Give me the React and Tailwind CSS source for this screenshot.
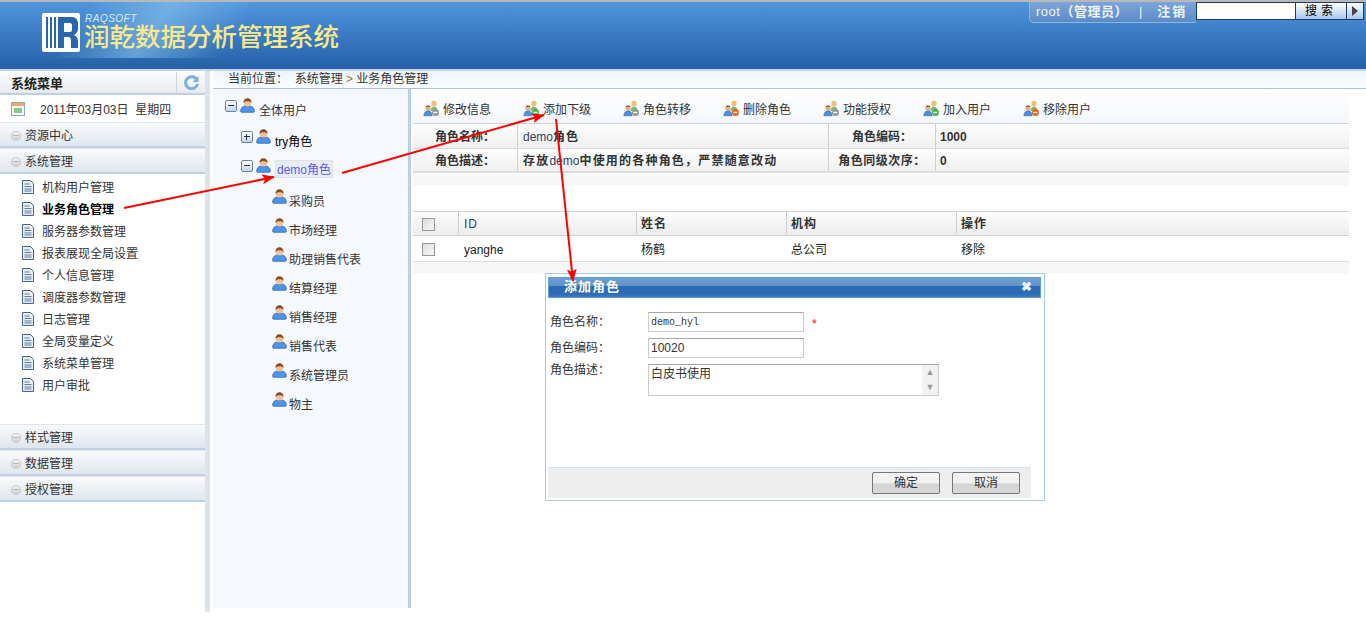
import React from 'react';

const FONT = '"Liberation Sans", "Noto Sans CJK SC", sans-serif';

const menuItems = ['机构用户管理', '业务角色管理', '服务器参数管理', '报表展现全局设置', '个人信息管理', '调度器参数管理', '日志管理', '全局变量定义', '系统菜单管理', '用户审批'];
const treeChildren = ['采购员', '市场经理', '助理销售代表', '结算经理', '销售经理', '销售代表', '系统管理员', '物主'];
const tools = [
  { label: '修改信息', badge: '#8a9a9a' },
  { label: '添加下级', badge: '#4caf50' },
  { label: '角色转移', badge: '#8a9a9a' },
  { label: '删除角色', badge: '#e8641c' },
  { label: '功能授权', badge: '#8a9a9a' },
  { label: '加入用户', badge: '#4caf50' },
  { label: '移除用户', badge: '#e8641c' },
];

const Person = () => (
  <svg width="15" height="15" viewBox="0 0 15 15" className="shrink-0">
    <path d="M.6 13c0-2.500 2-4.800 3.900-4.800h6c1.900 0 3.900 2.300 3.900 4.800 0 .8-.5 1.300-1 1.300H1.600c-.5 0-1-.5-1-1.300z" fill="#4a94ec" stroke="#2a5fa8" strokeWidth="0.7" />
    <circle cx="7.500" cy="4.700" r="3.800" fill="#f2c29a" />
    <path d="M3.500 5C3.300 2 5.200.3 7.500.3S11.700 2 11.500 5C10.500 3.600 9 3.200 7.500 3.200S4.500 3.600 3.500 5z" fill="#8a4a20" />
  </svg>
);

const GroupIcon = ({ badge }) => (
  <svg width="18" height="17" viewBox="0 0 18 17" className="shrink-0">
    <circle cx="11" cy="3.500" r="2.700" fill="#f0c070" />
    <path d="M7.500 11c0-3 1.500-4.500 3.500-4.500s3.500 1.500 3.500 4.500z" fill="#86b86a" />
    <circle cx="5" cy="8" r="2.600" fill="#e8b08a" />
    <path d="M4 5.800c2-1 3 0 3.300 1.500-1.500-.8-3-.6-4.500 0 0-.7.500-1.200 1.200-1.500z" fill="#8a4a20" />
    <path d="M.8 15.800c0-3 1.700-5 4.200-5s4.200 2 4.200 5z" fill="#4a90e2" stroke="#2a5fa8" strokeWidth="0.5" />
    <circle cx="12.500" cy="12.500" r="3.500" fill={badge} />
    <rect x="10.500" y="11.800" width="4" height="1.400" fill="#fff" />
  </svg>
);

const TreeBox = ({ plus }) => (
  <span className="relative w-[12px] h-[12px] shrink-0 border border-[#6a86a4] rounded-[2px] bg-gradient-to-b from-[#ffffff] to-[#c4d4e6]">
    <span className="absolute left-[2px] top-[4px] w-[6px] h-[1px] bg-[#223344]" />
    {plus && <span className="absolute left-[4px] top-[2px] w-[1px] h-[6px] bg-[#223344]" />}
  </span>
);

const FileIcon = () => (
  <svg width="12" height="14" viewBox="0 0 12 14" className="shrink-0">
    <path d="M.5.500h8l3 3v10H.500z" fill="#e8eef6" stroke="#46648a" />
    <path d="M2.500 4h5M2.500 6.500h7M2.500 9h7M2.500 11h7" stroke="#5a7aa0" strokeWidth="1" />
  </svg>
);

const AccordionBar = ({ label }) => (
  <div className="flex items-center h-[26px] border-t border-b-2 border-t-[#e4e4e4] border-b-[#bdd0e4] bg-gradient-to-b from-[#f8fafc] to-[#dfe6ee] pl-[11px] gap-[4px] text-[12px] text-[#333]">
    <span className="w-[10px] h-[10px] mt-[2px] rounded-full border border-[#c8c8c8] bg-gradient-to-b from-[#f4f4f4] to-[#cfcfcf] flex items-center justify-center">
      <span className="w-[6px] h-px bg-[#bbb]" />
    </span>
    <span className="pt-[2px]">{label}</span>
  </div>
);

const Checkbox = () => (
  <span className="block w-[13px] h-[13px] border border-[#999] bg-gradient-to-br from-[#dcdcdc] to-[#f8f8f8]" />
);

const Cell = ({ className, children }) => (
  <div className={`flex items-center pt-[2px] border-r border-[#ccd0d6] ${className}`}>{children}</div>
);

const Arrows = () => (
  <svg className="absolute left-0 top-0 pointer-events-none" width="1366" height="618" viewBox="0 0 1366 618">
    <defs>
      <marker id="head" markerWidth="14" markerHeight="12" refX="12" refY="6" orient="auto" markerUnits="userSpaceOnUse">
        <path d="M0 1L13 6L0 11L3 6z" fill="#f00" />
      </marker>
    </defs>
    <g stroke="#f00" strokeWidth="2" fill="none">
      <line x1="124" y1="208" x2="274" y2="177" markerEnd="url(#head)" />
      <line x1="342" y1="173" x2="544" y2="115" markerEnd="url(#head)" />
      <line x1="556" y1="119" x2="573" y2="281" markerEnd="url(#head)" />
    </g>
  </svg>
);

const Dialog = () => (
  <div className="absolute left-[545px] top-[273px] w-[500px] h-[228px] border border-[#a4cce4] bg-white p-[2px] pt-[3px] flex flex-col text-[12px] text-[#333]">
    <div className="flex items-start justify-between h-[21px] mr-[1px] border border-[#5aa0dc] bg-[linear-gradient(#6f9fd0_0%,#5f93ca_40%,#2b6ab4_42%,#2b6ab4_80%,#3c78bc_100%)] pl-[15px] pr-[8px]">
      <span className="text-[13px] leading-[17px] font-bold text-white tracking-[1px]">添加角色</span>
      <span className="text-[13px] font-bold leading-[18px] text-[#e8eef6]">✖</span>
    </div>
    <div className="flex-1 pl-[2px] pt-[14px] flex flex-col gap-[6px]">
      <div className="flex items-center h-[20px]">
        <span className="w-[98px]">角色名称：</span>
        <span className="w-[156px] h-[20px] border border-[#c8ccd0] border-t-[#a8a8a8] pl-[2px] flex items-center text-[10px] font-['Liberation_Mono']">demo_hyl</span>
        <span className="ml-[8px] mt-[3px] text-[#f00] text-[12px]">*</span>
      </div>
      <div className="flex items-center h-[20px]">
        <span className="w-[98px]">角色编码：</span>
        <span className="w-[156px] h-[20px] border border-[#c8ccd0] border-t-[#a8a8a8] pl-[2px] flex items-center text-[12px]">10020</span>
      </div>
      <div className="flex items-start h-[32px]">
        <span className="w-[98px] leading-[14px] mt-[-1px]">角色描述：</span>
        <div className="w-[291px] h-[32px] border border-[#c8ccd0] border-t-[#a8a8a8] flex justify-between">
          <span className="pl-[2px] leading-[16px] pt-[1px]">白皮书使用</span>
          <div className="w-[16px] bg-[#f2f2f2] flex flex-col items-center justify-around text-[#9a9a9a] text-[9px] leading-none">
            <span>▲</span>
            <span>▼</span>
          </div>
        </div>
      </div>
    </div>
    <div className="h-[31px] mr-[11px] border-t border-[#cfe0ee] bg-[#eeeeee] flex items-center justify-end gap-[12px] pr-[11px]">
      {['确定', '取消'].map((t) => (
        <span key={t} className="w-[68px] h-[22px] border border-[#777] rounded-[2px] flex items-center justify-center bg-[linear-gradient(#f4f4f4_0%,#f0f0f0_50%,#d4d4d4_55%,#d8d8d8_100%)]">{t}</span>
      ))}
    </div>
  </div>
);

const App = () => {
  return (
    <div className="relative w-[1366px] h-[618px] overflow-hidden bg-white" style={{ fontFamily: FONT }}>
      {/* Header */}
      <header className="relative h-[71px] border-t-2 border-[#b8b8b8] border-b-[2px] border-b-[#c6d4de] bg-gradient-to-b from-[#4f96dc] to-[#2560a8]">
        <div className="absolute left-0 top-0 w-[320px] h-[56px] bg-[linear-gradient(125deg,#8cc4ec00_25%,#8cc4ec99_48%,#8cc4ec00_72%)]" />
        <div className="absolute left-[42px] top-[11px] flex items-start">
          <svg width="38" height="39" viewBox="0 0 38 39" className="shrink-0">
            <rect width="38" height="39" rx="2" fill="#fff" />
            <path d="M4 4h2v31H4zM8 4h2v31H8zM12 4h2v31h-2z" fill="#2a66ae" />
            <path d="M16 4h14c4 0 6 3 6 7v5c0 3-2 5-4 6 2 1 4 3 4 6v7h-7v-8c0-2-1-3-3-3h-4v11h-6zM22 10v9h6c1 0 2-1 2-2v-5c0-1-1-2-2-2z" fill="#2a66ae" />
          </svg>
          <div className="ml-[4px] flex flex-col">
            <span className="h-[11px] pl-px text-[10px] leading-[11px] italic text-[#dceaf6] tracking-[0.5px]">RAQSOFT</span>
            <span className="h-[27px] text-[25.500px] leading-[27px] font-medium text-[#f8e88c] whitespace-nowrap">润乾数据分析管理系统</span>
          </div>
        </div>
        <div className="absolute right-[2px] top-[0px] flex items-start">
          <div className="w-[167px] h-[21px] rounded-bl-[5px] border-l border-b border-[#8cb4e0] bg-gradient-to-b from-[#7da6d8] to-[#5a8ac8] flex items-center pl-[6px] text-[13px] text-[#eef4fb]">
            <span className="tracking-[0.5px]">root</span>
            <span className="font-bold tracking-[0.5px]">（管理员）</span>
            <span className="ml-[11px] mr-[15px]">|</span>
            <span className="font-bold tracking-[2px]">注销</span>
          </div>
          <div className="w-[100px] h-[18px] border border-[#1c3a78] bg-white" />
          <div className="w-[51px] h-[18px] border-y border-r border-[#1c3a78] bg-gradient-to-b from-[#ffffff] to-[#a8c8ea] flex items-center justify-center text-[12px] text-black tracking-[4px]">搜索</div>
          <div className="w-[17px] h-[18px] border-y border-r border-[#1c3a78] bg-gradient-to-b from-[#ffffff] to-[#a8c8ea] flex items-center justify-center">
            <span className="w-0 h-0 border-y-[5px] border-y-transparent border-l-[6px] border-l-[#444]" />
          </div>
        </div>
      </header>

      <div className="flex">
        {/* Sidebar */}
        <aside className="w-[205px] shrink-0 pt-[1px]">
          <div className="flex items-center justify-between h-[23px] border-b-2 border-[#bdd0e4] bg-gradient-to-b from-[#fbfcfd] to-[#e6ebf1] pl-[11px]">
            <span className="pt-[2px] text-[13px] font-bold text-[#222]">系统菜单</span>
            <div className="w-[29px] h-full border-l border-[#ccd4dc] flex items-center justify-center">
              <svg width="15" height="15" viewBox="0 0 15 15">
                <path d="M13 5A6 6 0 1 0 13.500 9" fill="none" stroke="#7fb0dc" strokeWidth="3" />
                <path d="M14.500 1v6h-6z" fill="#7fb0dc" />
              </svg>
            </div>
          </div>
          <div className="flex items-center h-[27px] pl-[11px] text-[12px] text-[#333]">
            <svg width="14" height="14" viewBox="0 0 14 14" className="shrink-0">
              <rect x=".5" y=".5" width="13" height="13" fill="#fdfbf0" stroke="#8aa8c8" />
              <rect x="1" y="1" width="12" height="3" fill="#f0a868" />
              <rect x="3" y="6" width="8" height="5" fill="#8cc88c" />
            </svg>
            <span className="ml-[15px] pt-[2px]">2011年03月03日&nbsp;&nbsp;星期四</span>
          </div>
          <AccordionBar label="资源中心" />
          <AccordionBar label="系统管理" />
          <ul className="h-[250px] pt-[2px]">
            {menuItems.map((m, i) => (
              <li key={m} className={`flex items-center h-[22px] pl-[22px] gap-[8px] text-[12px] ${i === 1 ? 'font-bold text-black' : 'text-[#333]'}`}>
                <FileIcon />
                <span className="pt-[2px]">{m}</span>
              </li>
            ))}
          </ul>
          <AccordionBar label="样式管理" />
          <AccordionBar label="数据管理" />
          <AccordionBar label="授权管理" />
        </aside>
        <div className="w-[5px] h-[541px] bg-[#d9e4ef]" />

        <div className="ml-[3px] flex-1 flex flex-col">
          {/* Breadcrumb */}
          <div className="h-[18px] pb-[2px] border-b border-[#b0bce0] bg-gradient-to-b from-[#eef5fa] to-[#fbfdfe] pl-[15px] flex items-center text-[12px] text-[#333] whitespace-pre">
            当前位置：  系统管理 <span className="text-[#a07030]">&gt; </span>业务角色管理
          </div>

          <div className="flex flex-1">
            {/* Tree */}
            <div className="w-[195px] h-[519px] bg-[#f5f8fd] text-[12px] text-[#333] pl-[12px] pt-[11px]">
              <div className="flex items-start h-[31px] gap-[3px]">
                <TreeBox />
                <span className="mt-[-2px]"><Person /></span>
                <span className="ml-[1px] mt-[2px]">全体用户</span>
              </div>
              <div className="flex items-start h-[29px] gap-[3px] ml-[16px]">
                <TreeBox plus />
                <span className="mt-[-2px]"><Person /></span>
                <span className="ml-[1px] mt-[2px] text-black">try角色</span>
              </div>
              <div className="flex items-start h-[31px] gap-[3px] ml-[16px]">
                <TreeBox />
                <span className="mt-[-2px]"><Person /></span>
                <span className="ml-[1px] h-[18px] w-[58px] pt-[1px] flex items-center justify-center whitespace-nowrap bg-[#e8edf4] border border-[#dde2e8] text-[#5a5aff]">demo角色</span>
              </div>
              {treeChildren.map((c) => (
                <div key={c} className="flex items-start h-[29px] ml-[47px] gap-[2px]">
                  <span className="mt-[-2px]"><Person /></span>
                  <span className="mt-[2px]">{c}</span>
                </div>
              ))}
            </div>
            <div className="w-[3px] h-[519px] bg-[#b9d0e8]" />

            {/* Content */}
            <main className="ml-[2px] w-[936px] text-[12px] text-[#333]">
              <div className="flex items-center h-[34px] pl-[10px] pt-[5px] bg-gradient-to-b from-[#ffffff] to-[#f4f7fb]">
                {tools.map((t) => (
                  <div key={t.label} className="w-[100px] flex items-center gap-[2px]">
                    <GroupIcon badge={t.badge} />
                    <span className="pt-[2px]">{t.label}</span>
                  </div>
                ))}
              </div>
              <div className="border-t border-[#cfd2d6] font-bold">
                <div className="flex h-[25px] border-b border-[#d8dade] bg-gradient-to-b from-[#fdfdfd] to-[#f0f0f0]">
                  <Cell className="w-[105px] pl-[22px]">角色名称：</Cell>
                  <Cell className="w-[311px] pl-[5px] tracking-[1px]"><span className="font-normal tracking-normal text-[#2a4068]">demo</span>角色</Cell>
                  <Cell className="w-[107px] justify-center">角色编码：</Cell>
                  <div className="flex-1 pl-[4px] pt-[2px] flex items-center">1000</div>
                </div>
                <div className="flex h-[24px] border-b-2 border-[#dcdcdc] bg-gradient-to-b from-[#fdfdfd] to-[#f0f0f0]">
                  <Cell className="w-[105px] pl-[22px]">角色描述：</Cell>
                  <Cell className="w-[311px] pl-[5px] tracking-[1.200px]">存放<span className="font-normal tracking-normal text-[#2a4068]">demo</span>中使用的各种角色，严禁随意改动</Cell>
                  <Cell className="w-[107px] justify-center tracking-[0.5px]">角色同级次序：</Cell>
                  <div className="flex-1 pl-[4px] pt-[2px] flex items-center">0</div>
                </div>
              </div>
              <div className="h-[12px] mt-px bg-[#f7f7f7]" />
              <div className="h-[25px]" />
              <div className="flex h-[25px] pb-px border-y border-[#cfd2d6] bg-gradient-to-b from-[#fdfdfd] to-[#ececec] font-bold tracking-[1px]">
                <Cell className="w-[46px] pl-[9px]"><Checkbox /></Cell>
                <Cell className="w-[178px] pl-[5px]"><span className="font-normal text-[#2a4068]">ID</span></Cell>
                <Cell className="w-[150px] pl-[4px]">姓名</Cell>
                <Cell className="w-[170px] pl-[4px]">机构</Cell>
                <div className="flex-1 pl-[4px] pt-[2px] flex items-center">操作</div>
              </div>
              <div className="flex items-center h-[26px] pt-[2px] border-b border-[#dcdcdc] text-[#222]">
                <div className="w-[46px] pl-[9px]"><Checkbox /></div>
                <div className="w-[178px] pl-[5px]">yanghe</div>
                <div className="w-[150px] pl-[4px]">杨鹤</div>
                <div className="w-[170px] pl-[4px]">总公司</div>
                <div className="flex-1 pl-[4px]">移除</div>
              </div>
              <div className="h-[12px] bg-[#f7f7f7]" />
            </main>
          </div>
        </div>
      </div>

      <Dialog />
      <Arrows />
    </div>
  );
};

export default App;
